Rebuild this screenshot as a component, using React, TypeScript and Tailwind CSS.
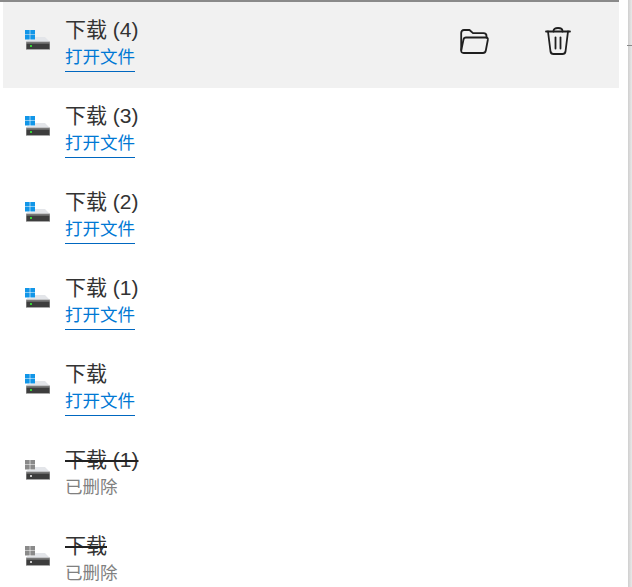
type Item = { name: string; deleted?: boolean };

const items: Item[] = [
  { name: "下载 (4)" },
  { name: "下载 (3)" },
  { name: "下载 (2)" },
  { name: "下载 (1)" },
  { name: "下载" },
  { name: "下载 (1)", deleted: true },
  { name: "下载", deleted: true },
];

function DriveIcon({ deleted }: { deleted?: boolean }) {
  const win = deleted ? "#8a8a8a" : "#1296e8";
  return (
    <svg width="26" height="20" viewBox="0 0 26 20" className="shrink-0 -translate-y-[5px]">
      <rect x="0" y="0" width="4.7" height="4.5" fill={win} />
      <rect x="5.3" y="0" width="4.7" height="4.5" fill={win} />
      <rect x="0" y="5" width="4.7" height="4.5" fill={win} />
      <rect x="5.3" y="5" width="4.7" height="4.5" fill={win} />
      <path d="M1 12 L2.5 10 H10 V7 H20 L25 12 Z" fill="#e3e5e9" />
      <rect x="1" y="11.5" width="24" height="8.5" fill="#a8a8a8" />
      <rect x="1.5" y="12" width="23" height="1.5" fill="#787878" />
      <rect x="1.5" y="13.5" width="23" height="5.5" fill="#3d3d3d" />
      <rect x="5" y="15" width="2" height="2" fill={deleted ? "#c8c8c8" : "#35d235"} />
    </svg>
  );
}

function FolderIcon() {
  return (
    <svg width="29" height="25" viewBox="0 0 29 25" fill="none" stroke="#1f1f1f" strokeWidth="1.8" strokeLinejoin="round" strokeLinecap="round">
      <path d="M1.2 21 V4 Q1.2 1 4 1 H9.5 L13 4.2 H23.5 Q26.5 4.2 26.5 7 V8.5" />
      <path d="M6 8.5 H26 Q28.2 8.5 27.8 11 L25.8 21.5 Q25.3 24 23 24 H3.7 Q0.8 24 1.3 21 L3.5 10.5 Q3.9 8.5 6 8.5 Z" />
    </svg>
  );
}

function TrashIcon() {
  return (
    <svg width="26" height="28" viewBox="0 0 26 28" fill="none" stroke="#1f1f1f" strokeWidth="1.8" strokeLinejoin="round" strokeLinecap="round">
      <path d="M1 4.5 H25" />
      <path d="M8.5 4.5 V4 Q8.5 1 13 1 Q17.5 1 17.5 4 V4.5" />
      <path d="M3 4.5 L5.5 24.5 Q5.9 27 8.5 27 H17.5 Q20.1 27 20.5 24.5 L23 4.5" />
      <path d="M10.5 10.5 V21.5" />
      <path d="M15.5 10.5 V21.5" />
    </svg>
  );
}

function Row({ item, active }: { item: Item; active?: boolean }) {
  return (
    <div className={`flex h-[86px] items-center pl-[22px] ${active ? "bg-[#f1f1f1]" : ""}`}>
      <DriveIcon deleted={item.deleted} />
      <div className="ml-[14px] flex min-w-0 flex-1 -translate-y-[2px] flex-col items-start">
        <span
          className={`text-[21px] leading-[30px] text-[#333333] ${item.deleted ? "line-through decoration-[#222222]" : ""}`}
        >
          {item.name}
        </span>
        {item.deleted ? (
          <span className="block pb-[3px] text-[17.5px] leading-[24px] text-[#808080]">已删除</span>
        ) : (
          <span className="block border-b border-[#0067c0] pb-[2px] text-[17.5px] leading-[24px] text-[#0078d4]">打开文件</span>
        )}
      </div>
      {active && (
        <div className="flex -translate-y-[4px] items-center gap-[56px] pr-[48px]">
          <FolderIcon />
          <TrashIcon />
        </div>
      )}
    </div>
  );
}

export default function App() {
  return (
    <div className="flex h-[587px] w-[632px] overflow-hidden bg-white font-['Liberation_Sans','Noto_Sans_CJK_SC',sans-serif]">
      <div className="w-[619px] shrink-0">
        <div className="h-[2px] bg-[#8a8a8a]" />
        <div className="pl-[3px]">
          {items.map((item, i) => (
            <Row key={i} item={item} active={i === 0} />
          ))}
        </div>
      </div>
      {/* scrollbar track at the right edge */}
      <div className="relative ml-[9px] w-[4px] bg-gradient-to-r from-[#cfcfcf] to-[#e8e8e8]">
        <div className="absolute top-[45px] -left-[1px] h-[1px] w-[5px] bg-[#8a8a8a]" />
      </div>
    </div>
  );
}
